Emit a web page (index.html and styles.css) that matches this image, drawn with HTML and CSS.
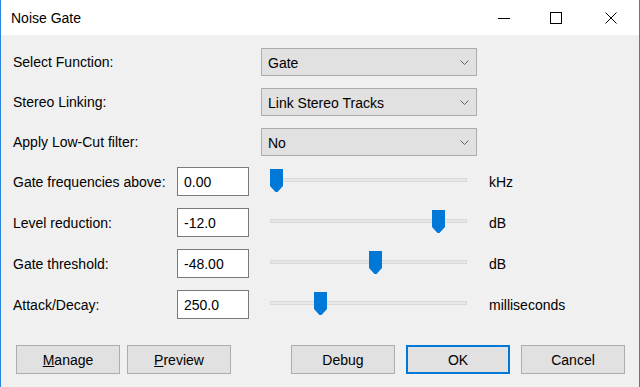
FILE: index.html
```html
<!DOCTYPE html>
<html lang="en">
<head>
    <meta charset="UTF-8">
    <meta name="viewport" content="width=device-width, initial-scale=1.0">
    <title>Noise Gate</title>
    <link rel="stylesheet" href="styles.css">
</head>
<body>
    <div class="window">
        <!-- Title bar -->
        <div class="titlebar">
            <span class="title">Noise Gate</span>
            <div class="winctl">
                <svg width="12" height="12" viewBox="0 0 12 12"><path d="M0 6.5H12" stroke="#000" stroke-width="1"/></svg>
                <svg width="12" height="12" viewBox="0 0 12 12"><rect x="0.5" y="0.5" width="11" height="11" fill="none" stroke="#000" stroke-width="1"/></svg>
                <svg class="close" width="12" height="12" viewBox="0 0 12 12"><path d="M0.5 0.5L11.5 11.5M11.5 0.5L0.5 11.5" stroke="#000" stroke-width="1"/></svg>
            </div>
        </div>

        <div class="content">
            <div class="fields">
                <!-- Choice rows -->
                <div class="row">
                    <label class="label-wide">Select Function:</label>
                    <div class="dropdown"><span>Gate</span><svg width="9" height="5" viewBox="0 0 9 5"><path d="M0.5 0.5L4.5 4.5L8.5 0.5" fill="none" stroke="#5f5f5f"/></svg></div>
                </div>
                <div class="row">
                    <label class="label-wide">Stereo Linking:</label>
                    <div class="dropdown"><span>Link Stereo Tracks</span><svg width="9" height="5" viewBox="0 0 9 5"><path d="M0.5 0.5L4.5 4.5L8.5 0.5" fill="none" stroke="#5f5f5f"/></svg></div>
                </div>
                <div class="row">
                    <label class="label-wide">Apply Low-Cut filter:</label>
                    <div class="dropdown"><span>No</span><svg width="9" height="5" viewBox="0 0 9 5"><path d="M0.5 0.5L4.5 4.5L8.5 0.5" fill="none" stroke="#5f5f5f"/></svg></div>
                </div>

                <!-- Slider rows -->
                <div class="row slider-row first">
                    <label class="label">Gate frequencies above:</label>
                    <input class="num" type="text" value="0.00">
                    <div class="slider">
                        <div class="track"></div>
                        <svg class="thumb" style="left: 6px" width="13" height="24" viewBox="0 0 13 24"><path d="M0 0H13V17L7.5 23H5.5L0 17Z" fill="#0078d7"/></svg>
                    </div>
                    <span class="unit">kHz</span>
                </div>
                <div class="row slider-row">
                    <label class="label">Level reduction:</label>
                    <input class="num" type="text" value="-12.0">
                    <div class="slider">
                        <div class="track"></div>
                        <svg class="thumb" style="left: 168px" width="13" height="24" viewBox="0 0 13 24"><path d="M0 0H13V17L7.5 23H5.5L0 17Z" fill="#0078d7"/></svg>
                    </div>
                    <span class="unit">dB</span>
                </div>
                <div class="row slider-row">
                    <label class="label">Gate threshold:</label>
                    <input class="num" type="text" value="-48.00">
                    <div class="slider">
                        <div class="track"></div>
                        <svg class="thumb" style="left: 105px" width="13" height="24" viewBox="0 0 13 24"><path d="M0 0H13V17L7.5 23H5.5L0 17Z" fill="#0078d7"/></svg>
                    </div>
                    <span class="unit">dB</span>
                </div>
                <div class="row slider-row">
                    <label class="label">Attack/Decay:</label>
                    <input class="num" type="text" value="250.0">
                    <div class="slider">
                        <div class="track"></div>
                        <svg class="thumb" style="left: 50px" width="13" height="24" viewBox="0 0 13 24"><path d="M0 0H13V17L7.5 23H5.5L0 17Z" fill="#0078d7"/></svg>
                    </div>
                    <span class="unit">milliseconds</span>
                </div>
            </div>

            <!-- Dialog buttons -->
            <div class="buttons">
                <button class="btn"><u>M</u>anage</button>
                <button class="btn"><u>P</u>review</button>
                <button class="btn push">Debug</button>
                <button class="btn default">OK</button>
                <button class="btn">Cancel</button>
            </div>
        </div>
    </div>
</body>
</html>
```

FILE: styles.css
```css
body {
    margin: 0;
    font-family: "Liberation Sans", Arial, sans-serif;
    font-size: 14px;
    color: #000;
}

.window {
    height: 387px;
    box-sizing: border-box;
    border-left: 1px solid #2a86dc;
    border-right: 1px solid #2a86dc;
    background-color: #f0f0f0;
}

.titlebar {
    height: 35px;
    background-color: #fff;
    display: flex;
    align-items: center;
    padding-left: 10px;
}

.title {
    flex: 1;
}

.winctl {
    display: flex;
    gap: 40px;
    padding-right: 22px;
}

.winctl svg {
    display: block;
}

.winctl .close {
    margin-left: 3px;
}

.content {
    padding: 13px 14px 0 12px;
}

.fields {
    display: flex;
    flex-direction: column;
    gap: 12px;
}

.row {
    display: flex;
    align-items: center;
    height: 28px;
}

.label-wide {
    width: 248px;
}

.dropdown {
    width: 216px;
    height: 28px;
    box-sizing: border-box;
    border: 1px solid #adadad;
    background-color: #e1e1e1;
    display: flex;
    align-items: center;
    justify-content: space-between;
    padding: 1px 7px 0 6px;
}

.dropdown svg {
    display: block;
}

.slider-row {
    height: 29px;
}

.slider-row.first {
    margin-top: -1px;
}

.label {
    width: 164px;
}

.num {
    width: 72px;
    height: 29px;
    box-sizing: border-box;
    margin: 0;
    border: 1px solid #7a7a7a;
    background-color: #fff;
    padding: 0 6px;
    font-family: "Liberation Sans", Arial, sans-serif;
    font-size: 14px;
    color: #000;
    outline: none;
}

.slider {
    position: relative;
    width: 197px;
    height: 29px;
    margin-left: 15px;
    padding: 0 6px;
}

.track {
    margin-top: 11px;
    height: 2px;
    border: 1px solid #d9d9d9;
    background-color: #e7e7e7;
}

.thumb {
    position: absolute;
    top: 2px;
    display: block;
}

.unit {
    margin-left: 16px;
}

.buttons {
    display: flex;
    margin-top: 26px;
    padding-left: 3px;
}

.btn {
    width: 104px;
    height: 29px;
    box-sizing: border-box;
    margin: 0 11px 0 0;
    padding: 0;
    border: 1px solid #adadad;
    background-color: #e1e1e1;
    font-family: "Liberation Sans", Arial, sans-serif;
    font-size: 14px;
    color: #000;
}

.btn:first-child {
    margin-right: 7px;
}

.btn:last-child {
    margin-right: 0;
}

.push {
    margin-left: auto;
}

.default {
    border: 2px solid #0078d7;
}
```
